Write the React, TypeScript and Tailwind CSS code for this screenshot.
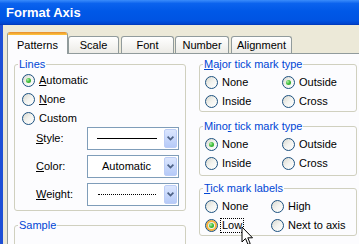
import type { ReactNode } from "react";

const Radio = ({ checked = false, hot = false }: { checked?: boolean; hot?: boolean }) => (
  <span
    className={`flex h-[13px] w-[13px] shrink-0 items-center justify-center rounded-full border border-[#1C5180] bg-[linear-gradient(135deg,#d8d8cf_0%,#f3f3ef_50%,#ffffff_100%)] ${
      hot ? "shadow-[inset_0_0_0_2px_#F7B23B]" : ""
    }`}
  >
    {checked && (
      <span className="h-[5px] w-[5px] rounded-full bg-[radial-gradient(circle_at_35%_35%,#b4efac_0%,#45c13f_45%,#1a961a_100%)]" />
    )}
  </span>
);

const Option = ({
  checked,
  hot,
  focus,
  children,
}: {
  checked?: boolean;
  hot?: boolean;
  focus?: boolean;
  children: ReactNode;
}) => (
  <div className="flex h-[19px] items-center gap-[4px]">
    <Radio checked={checked} hot={hot} />
    <span
      className={
        focus
          ? "ml-[-2px] border border-dotted border-black px-[1px] leading-[13px]"
          : "leading-[13px]"
      }
    >
      {children}
    </span>
  </div>
);

const Group = ({
  title,
  className = "",
  children,
}: {
  title: ReactNode;
  className?: string;
  children?: ReactNode;
}) => (
  <fieldset className={`rounded-[3px] border border-[#D0D0BF] ${className}`}>
    <legend className="ml-[3px] px-[1px] leading-[13px] text-[#0046D5]">{title}</legend>
    {children}
  </fieldset>
);

const Chevron = () => (
  <svg width="7" height="5" viewBox="0 0 7 5">
    <path d="M0.6 0.6 L3.5 3.6 L6.4 0.6" fill="none" stroke="#4D6185" strokeWidth="1.7" />
  </svg>
);

const Combo = ({ children }: { children: ReactNode }) => (
  <div className="flex h-[23px] w-[92px] border border-[#7F9DB9] bg-white p-[1px]">
    <div className="flex flex-1 items-center justify-center">{children}</div>
    <div className="flex w-[13px] items-center justify-center rounded-[2px] border border-[#BCCDF6] bg-[linear-gradient(#dbe6fe,#b6caf8)]">
      <Chevron />
    </div>
  </div>
);

const Tab = ({ children, className = "" }: { children: ReactNode; className?: string }) => (
  <div
    className={`flex h-[17px] justify-center rounded-t-[3px] border-x border-t border-[#919B9C] bg-[linear-gradient(#ffffff,#ecebe6)] pt-[2px] leading-[13px] ${className}`}
  >
    {children}
  </div>
);

export default function App() {
  return (
    <div className="relative h-[244px] w-[359px] overflow-hidden bg-[#ECE9D8] font-['Liberation_Sans',Arial,sans-serif] text-[11px] text-black">
      <div className="flex h-[25px] items-center bg-[linear-gradient(#3a8cfb_0%,#0b63ee_14%,#0058e7_45%,#0054e3_80%,#0045d0_94%,#0036b5_100%)] pl-[6px] text-[13px] font-bold text-white">
        Format Axis
      </div>

      <div className="border-l-[3px] border-[#1E4FD6] pl-[4px] pt-[7px]">
        {/* tabs */}
        <div className="flex h-[21px] items-end">
          <div className="relative z-10 mb-[-1px] flex h-[22px] w-[61px] flex-col overflow-hidden rounded-t-[3px] border-x border-[#919B9C] bg-[#FCFCFE]">
            <div className="h-[3px] bg-[linear-gradient(#e68b2c,#ffc73c)]" />
            <div className="pt-[4px] text-center leading-[13px]">Patterns</div>
          </div>
          <Tab className="w-[51px]">Scale</Tab>
          <Tab className="ml-[2px] w-[53px]">Font</Tab>
          <Tab className="ml-[1px] w-[54px]">Number</Tab>
          <Tab className="ml-[2px] w-[61px]">Alignment</Tab>
        </div>

        {/* panel */}
        <div className="h-[200px] w-[400px] border border-[#919B9C] bg-[#FCFCFE] pl-[6px] pt-[4px]">
          <div className="flex gap-[13px]">
            <div className="w-[172px]">
              <Group title="Lines">
                <div className="pl-[7px] pb-[4px]">
                  <Option checked>
                    <u>A</u>utomatic
                  </Option>
                  <Option>
                    <u>N</u>one
                  </Option>
                  <Option>Custom</Option>
                  <div className="mt-[-1px] flex flex-col gap-[5px]">
                    <div className="flex items-center">
                      <span className="w-[65px] pl-[14px]">
                        <u>S</u>tyle:
                      </span>
                      <Combo>
                        <div className="h-[1px] w-[60px] bg-black" />
                      </Combo>
                    </div>
                    <div className="flex items-center">
                      <span className="w-[65px] pl-[14px]">
                        <u>C</u>olor:
                      </span>
                      <Combo>
                        <span className="leading-[13px]">Automatic</span>
                      </Combo>
                    </div>
                    <div className="flex items-center">
                      <span className="w-[65px] pl-[14px]">
                        <u>W</u>eight:
                      </span>
                      <Combo>
                        <div className="w-[58px] border-t border-dotted border-black" />
                      </Combo>
                    </div>
                  </div>
                </div>
              </Group>
              <Group title="Sample" className="mt-[8px] h-[40px]" />
            </div>

            <div className="w-[158px]">
              <Group
                title={
                  <>
                    <u>M</u>ajor tick mark type
                  </>
                }
              >
                <div className="grid grid-cols-[77px_1fr] pl-[5px] pt-[2px]">
                  <Option>None</Option>
                  <Option checked>Outside</Option>
                  <Option>Inside</Option>
                  <Option>Cross</Option>
                </div>
              </Group>
              <Group
                title={
                  <>
                    Mino<u>r</u> tick mark type
                  </>
                }
                className="mt-[8px]"
              >
                <div className="grid grid-cols-[77px_1fr] pl-[5px] pb-[2px] pt-[2px]">
                  <Option checked>None</Option>
                  <Option>Outside</Option>
                  <Option>Inside</Option>
                  <Option>Cross</Option>
                </div>
              </Group>
              <Group
                title={
                  <>
                    <u>T</u>ick mark labels
                  </>
                }
                className="mt-[6px]"
              >
                <div className="grid grid-cols-[66px_1fr] pl-[5px] pt-[2px]">
                  <Option>None</Option>
                  <Option>High</Option>
                  <Option checked hot focus>
                    Low
                  </Option>
                  <Option>Next to axis</Option>
                </div>
              </Group>
            </div>
          </div>
        </div>
      </div>

      {/* mouse pointer */}
      <svg
        className="absolute left-[241px] top-[226px]"
        width="13"
        height="20"
        viewBox="0 0 13 20"
      >
        <path
          d="M1 1 L1 16 L4.5 12.5 L7 18.5 L9.2 17.6 L6.8 11.8 L11.5 11.8 Z"
          fill="#ffffff"
          stroke="#000000"
          strokeWidth="1"
          strokeLinejoin="miter"
        />
      </svg>
    </div>
  );
}
